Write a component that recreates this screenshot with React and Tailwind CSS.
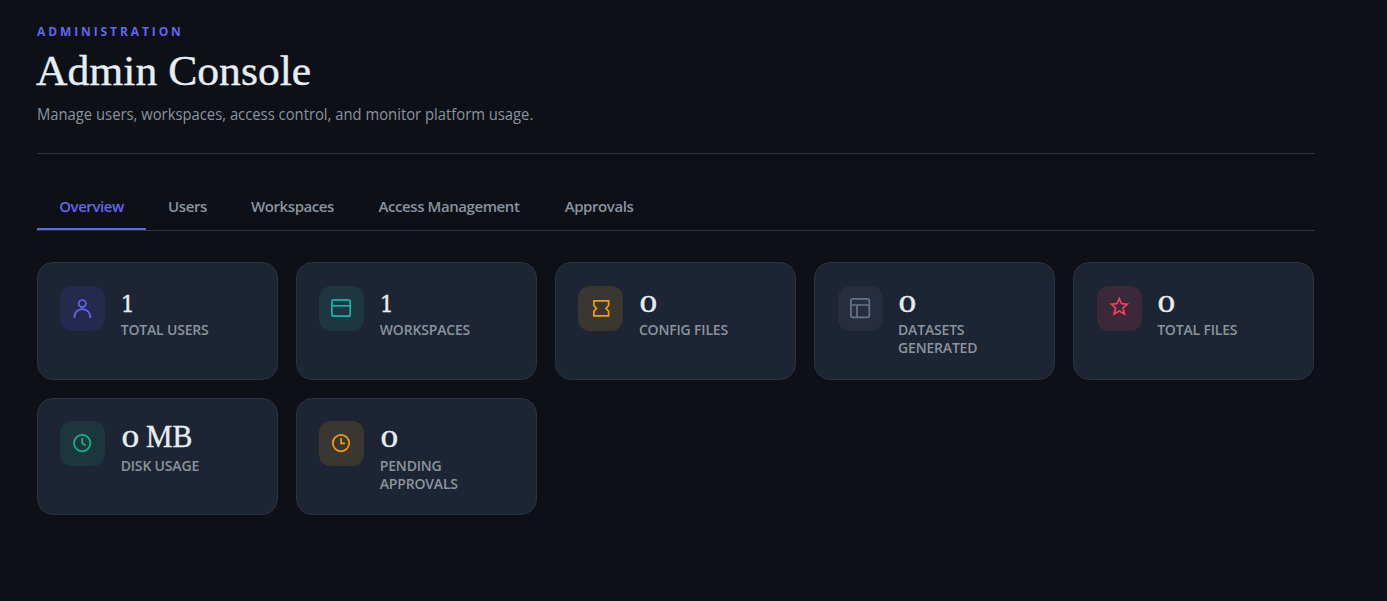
const tabs = [
  { label: 'Overview', width: 'w-[109px]', active: true },
  { label: 'Users', width: 'w-[83px]' },
  { label: 'Workspaces', width: 'w-[127px]' },
  { label: 'Access Management', width: 'w-[186px]' },
  { label: 'Approvals', width: 'w-[114px]' },
];

const stats = [
  {
    value: '1',
    label: ['Total Users'],
    tile: 'bg-[#252a4c] text-[#6366f1]',
    icon: (
      <>
        <circle cx="22.3" cy="17.6" r="3.6" />
        <path d="M14.4 32v-1a7.95 7.95 0 0 1 15.9 0v1" />
      </>
    ),
  },
  {
    value: '1',
    label: ['Workspaces'],
    tile: 'bg-[#1d3642] text-[#14b8a6]',
    icon: (
      <>
        <rect x="12.9" y="13.9" width="18.3" height="16.3" rx="2" />
        <path d="M12.9 19.8h18.3" />
      </>
    ),
  },
  {
    value: '0',
    label: ['Config Files'],
    tile: 'bg-[#3a3731] text-[#f59e0b]',
    icon: <path d="M15.9 14.9h14.7v4.6L28 22.4l2.6 2.9v4.6H15.9v-4.6l2.6-2.9-2.6-2.9z" />,
  },
  {
    value: '0',
    label: ['Datasets', 'Generated'],
    tile: 'bg-[#272c3f] text-[#64748b]',
    icon: (
      <>
        <rect x="12.9" y="12.9" width="18.4" height="18.4" rx="2" />
        <path d="M12.9 19h18.4M19 19v12.3" />
      </>
    ),
  },
  {
    value: '0',
    label: ['Total Files'],
    tile: 'bg-[#3b2839] text-[#f43f5e]',
    icon: <path d="M22.3 12.6l2.3 5.1 5.6.4-4.2 3.9 1.5 5.9-5.2-3-5.2 3 1.5-5.9-4.2-3.9 5.6-.4z" />,
  },
  {
    value: '0',
    unit: 'MB',
    label: ['Disk Usage'],
    tile: 'bg-[#1c363d] text-[#10b981]',
    icon: (
      <>
        <circle cx="22.2" cy="22.1" r="8.2" />
        <path d="M22.2 17v5.2l3.7 2.4" />
      </>
    ),
  },
  {
    value: '0',
    label: ['Pending', 'Approvals'],
    tile: 'bg-[#3a3731] text-[#f59e0b]',
    icon: (
      <>
        <circle cx="22" cy="22.1" r="8.2" />
        <path d="M22.1 17v5.4H26" />
      </>
    ),
  },
];

function StatCard({ value, unit, label, tile, icon }) {
  return (
    <div className="flex items-start gap-[15.5px] rounded-[16px] border border-[#2d333b] bg-[#1d2433] pt-[22.3px] pl-[22.2px]">
      <div className={`size-[45px] shrink-0 rounded-[12px] ${tile}`}>
        <svg viewBox="0 0 45 45" className="size-full" fill="none" stroke="currentColor" strokeWidth="1.7">
          {icon}
        </svg>
      </div>
      <div>
        <div className="flex h-[35.4px] font-['DejaVu_Serif'] text-[#e6edf3] [-webkit-text-stroke:0.4px_#e6edf3]">
          <span className={`inline-block origin-left text-[22px] leading-[38px] ${value === '0' ? 'scale-x-[1.34]' : ''}`}>{value}</span>
          {unit && (
            <span className="ml-[11px] inline-block origin-left scale-x-[0.93] font-['Liberation_Serif'] text-[32px] leading-[31px]">
              {unit}
            </span>
          )}
        </div>
        <div className="text-[14px] leading-[18px] font-semibold tracking-[-0.18px] text-[#8b949e] uppercase">
          {label.map((line) => (
            <div key={line} className="whitespace-nowrap">{line}</div>
          ))}
        </div>
      </div>
    </div>
  );
}

export default function App() {
  return (
    <div className="h-[601px] w-[1387px] overflow-hidden bg-[#0d1017] pl-[37px] font-['Open_Sans','Noto_Sans',sans-serif]">
      <div className="w-[1278px]">
        <header className="h-[154px] border-b border-[#2d333b] pt-[23px]">
          <p className="h-[18px] text-[12px] leading-[18px] font-bold tracking-[2.9px] text-[#6366f1]">ADMINISTRATION</p>
          <h1 className="mt-[5px] -ml-px h-[50px] origin-left scale-x-[1.015] font-['Liberation_Serif'] text-[43px] leading-[50px] whitespace-nowrap text-[#e6edf3] [-webkit-text-stroke:0.4px_#e6edf3]">
            Admin Console
          </h1>
          <p className="mt-[6px] origin-left scale-x-[0.925] text-[16px] leading-[25px] text-[#8b949e]">
            Manage users, workspaces, access control, and monitor platform usage.
          </p>
        </header>

        <nav className="mt-[31px] flex h-[46px] border-b border-[#2d333b]">
          {tabs.map((tab) => (
            <button
              key={tab.label}
              className={`h-[45px] border-b-2 text-center text-[15px] font-semibold tracking-[-0.42px] whitespace-nowrap ${tab.width} ${
                tab.active ? 'border-[#6366f1] text-[#6366f1]' : 'border-transparent text-[#8b949e]'
              }`}
            >
              {tab.label}
            </button>
          ))}
        </nav>

        <div className="mt-[31.4px] grid grid-cols-[repeat(5,241px)] grid-rows-[117.6px_117px] gap-x-[18.12px] gap-y-[18px]">
          {stats.map((stat) => (
            <StatCard key={stat.label[0]} {...stat} />
          ))}
        </div>
      </div>
    </div>
  );
}
